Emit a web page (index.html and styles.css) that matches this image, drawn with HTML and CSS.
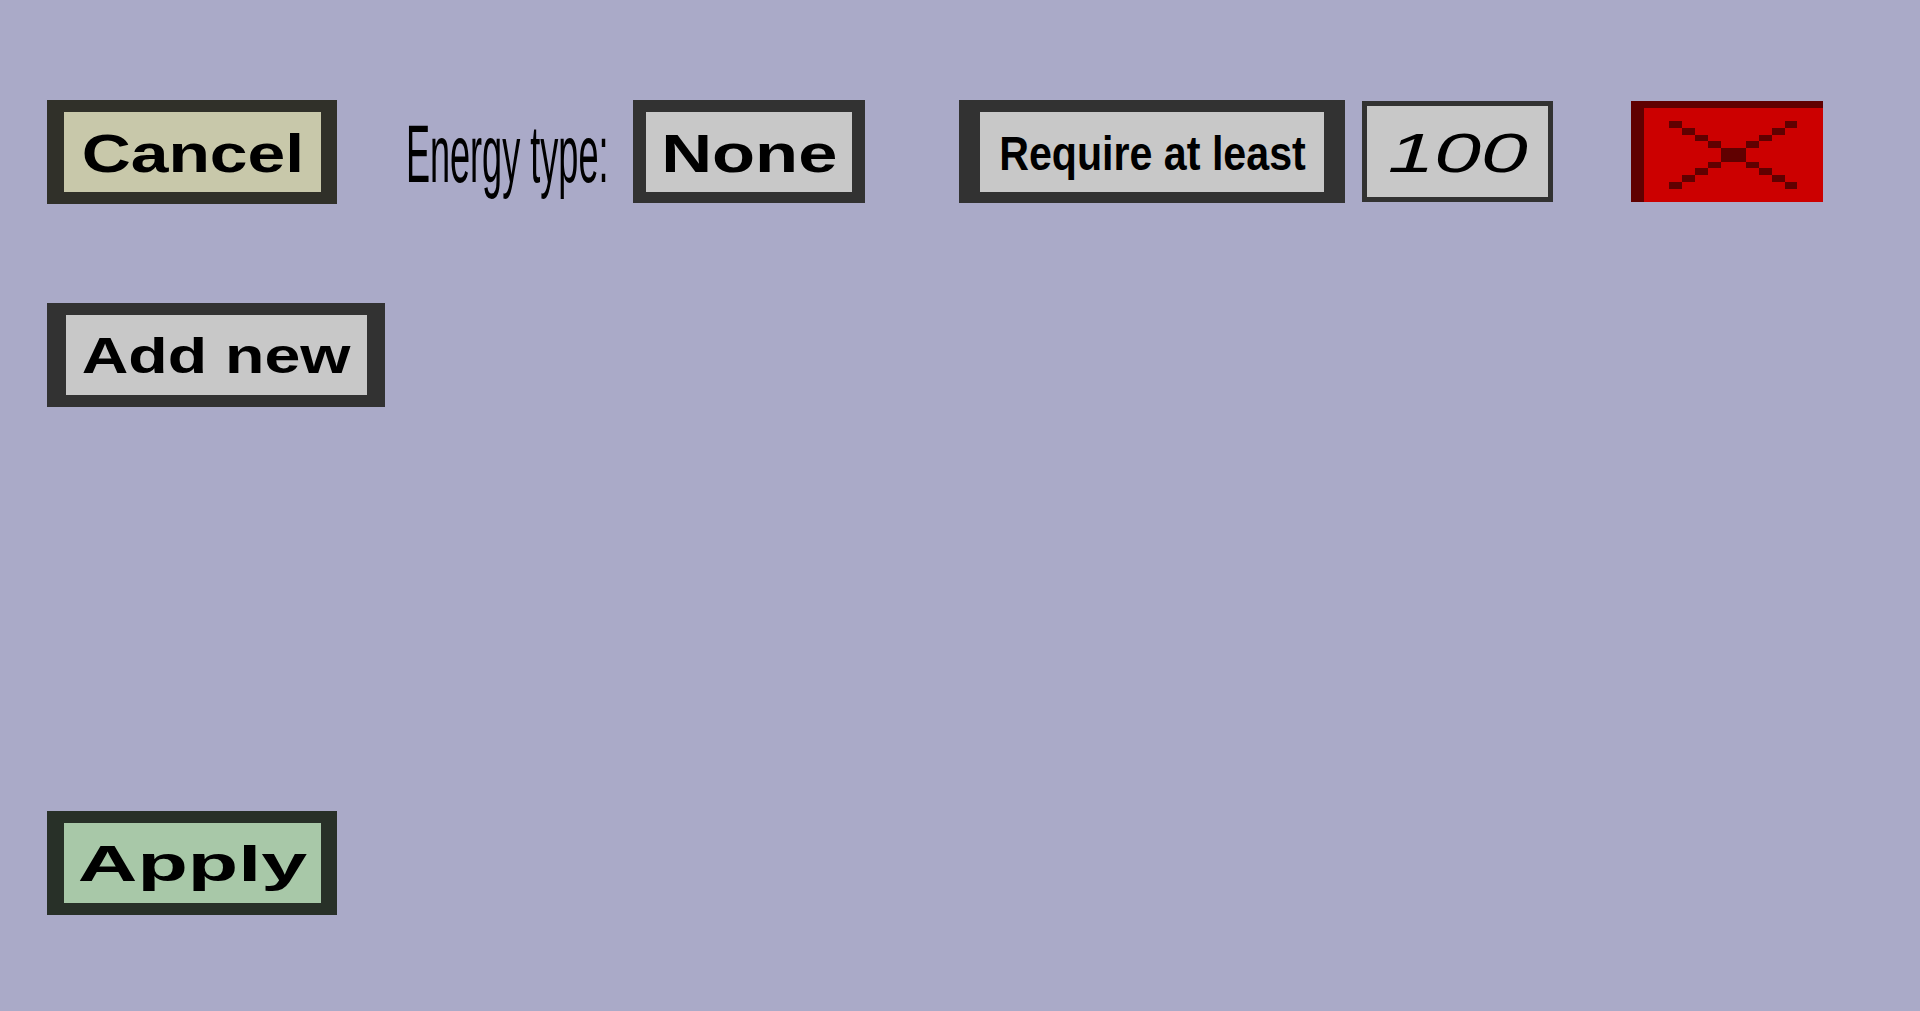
FILE: index.html
```html
<!DOCTYPE html>
<html lang="en">
  <head>
    <meta charset="UTF-8" />
    <meta name="viewport" content="width=device-width, initial-scale=1.0" />
    <title>Energy requirement</title>
    <link rel="stylesheet" href="styles.css">
  </head>
  <body>
    <main class="panel">
      <div class="row row-top">
        <button class="btn btn-cancel"><span class="txt txt-cancel">Cancel</span></button>
        <div class="field-label"><span class="txt txt-energy">Energy type:</span></div>
        <button class="btn btn-none"><span class="txt txt-none">None</span></button>
        <button class="btn btn-require"><span class="txt txt-require">Require at least</span></button>
        <div class="amount"><span class="txt txt-amount">100</span></div>
        <button class="btn-remove" title="Remove">
          <svg width="192" height="101" viewBox="0 0 576 303" preserveAspectRatio="none" shape-rendering="crispEdges">
            <rect x="0" y="0" width="576" height="303" fill="#cc0000" />
            <rect x="0" y="0" width="38" height="303" fill="#600000" />
            <rect x="0" y="0" width="576" height="20" fill="#600000" />
            <g fill="#600000">
              <rect x="114" y="60" width="39" height="20" />
              <rect x="462" y="60" width="37" height="20" />
              <rect x="153" y="80" width="39" height="21" />
              <rect x="423" y="80" width="39" height="21" />
              <rect x="192" y="101" width="39" height="20" />
              <rect x="384" y="101" width="39" height="20" />
              <rect x="231" y="121" width="39" height="20" />
              <rect x="345" y="121" width="39" height="20" />
              <rect x="270" y="141" width="75" height="41" />
              <rect x="231" y="182" width="39" height="20" />
              <rect x="345" y="182" width="39" height="20" />
              <rect x="192" y="202" width="39" height="20" />
              <rect x="384" y="202" width="39" height="20" />
              <rect x="153" y="222" width="39" height="21" />
              <rect x="423" y="222" width="39" height="21" />
              <rect x="114" y="243" width="39" height="20" />
              <rect x="462" y="243" width="37" height="20" />
            </g>
          </svg>
        </button>
      </div>

      <div class="row row-add">
        <button class="btn btn-add"><span class="txt txt-add">Add new</span></button>
      </div>

      <div class="row row-apply">
        <button class="btn btn-apply"><span class="txt txt-apply">Apply</span></button>
      </div>
    </main>
  </body>
</html>
```

FILE: styles.css
```css
/* Base */
* {
  box-sizing: border-box;
  margin: 0;
  padding: 0;
}

body {
  font-family: "Liberation Sans", Arial, sans-serif;
  background-color: #aaaac8;
  color: #000;
  min-height: 100vh;
}

.panel {
  padding: 100px 0 0 47px;
}

.row {
  display: flex;
  align-items: flex-start;
}

.row-add {
  margin-top: 99px;
}

.row-apply {
  margin-top: 404px;
}

/* Buttons */
button {
  font: inherit;
  color: inherit;
  cursor: pointer;
  background: none;
  border: none;
}

.btn {
  display: flex;
  align-items: center;
  justify-content: center;
  flex-shrink: 0;
  padding-top: 2px;
  border-style: solid;
  border-color: #323232;
  background-color: #c8c8c8;
  overflow: visible;
}

.txt {
  display: inline-block;
  flex-shrink: 0;
  white-space: nowrap;
  line-height: 1;
  font-weight: 700;
  transform-origin: center;
}

.btn-cancel {
  width: 290px;
  height: 104px;
  border-width: 12px 16px 12px 17px;
  border-color: #303029;
  background-color: #c8c8aa;
}

.txt-cancel {
  font-size: 53px;
  transform: scaleX(1.28);
}

.field-label {
  display: flex;
  align-items: center;
  justify-content: center;
  width: 203px;
  height: 104px;
  margin-left: 69px;
  padding-top: 4px;
}

.txt-energy {
  font-size: 82px;
  font-weight: 400;
  transform: scaleX(0.44);
}

.btn-none {
  width: 232px;
  height: 103px;
  margin-left: 24px;
  border-width: 12px 13px 11px 13px;
}

.txt-none {
  font-size: 53px;
  transform: scaleX(1.33);
}

.btn-require {
  width: 386px;
  height: 103px;
  margin-left: 94px;
  border-width: 12px 21px 11px 21px;
}

.txt-require {
  font-size: 49px;
  transform: scaleX(0.84);
}

.amount {
  display: flex;
  align-items: center;
  justify-content: center;
  width: 191px;
  height: 101px;
  margin-top: 1px;
  margin-left: 17px;
  padding-top: 3px;
  border: 5px solid #323232;
  background-color: #c8c8c8;
}

.txt-amount {
  font-size: 56px;
  font-weight: 400;
  font-style: italic;
  transform: scaleX(1.5);
}

.btn-remove {
  display: block;
  width: 192px;
  height: 101px;
  margin-top: 1px;
  margin-left: 78px;
}

.btn-remove svg {
  display: block;
}

.btn-add {
  width: 338px;
  height: 104px;
  border-width: 12px 18px 12px 19px;
}

.txt-add {
  font-size: 50px;
  transform: scaleX(1.29);
}

.btn-apply {
  width: 290px;
  height: 104px;
  border-width: 12px 16px 12px 17px;
  border-color: #283028;
  background-color: #a8c8a8;
}

.txt-apply {
  font-size: 50px;
  transform: scaleX(1.65);
}
```
